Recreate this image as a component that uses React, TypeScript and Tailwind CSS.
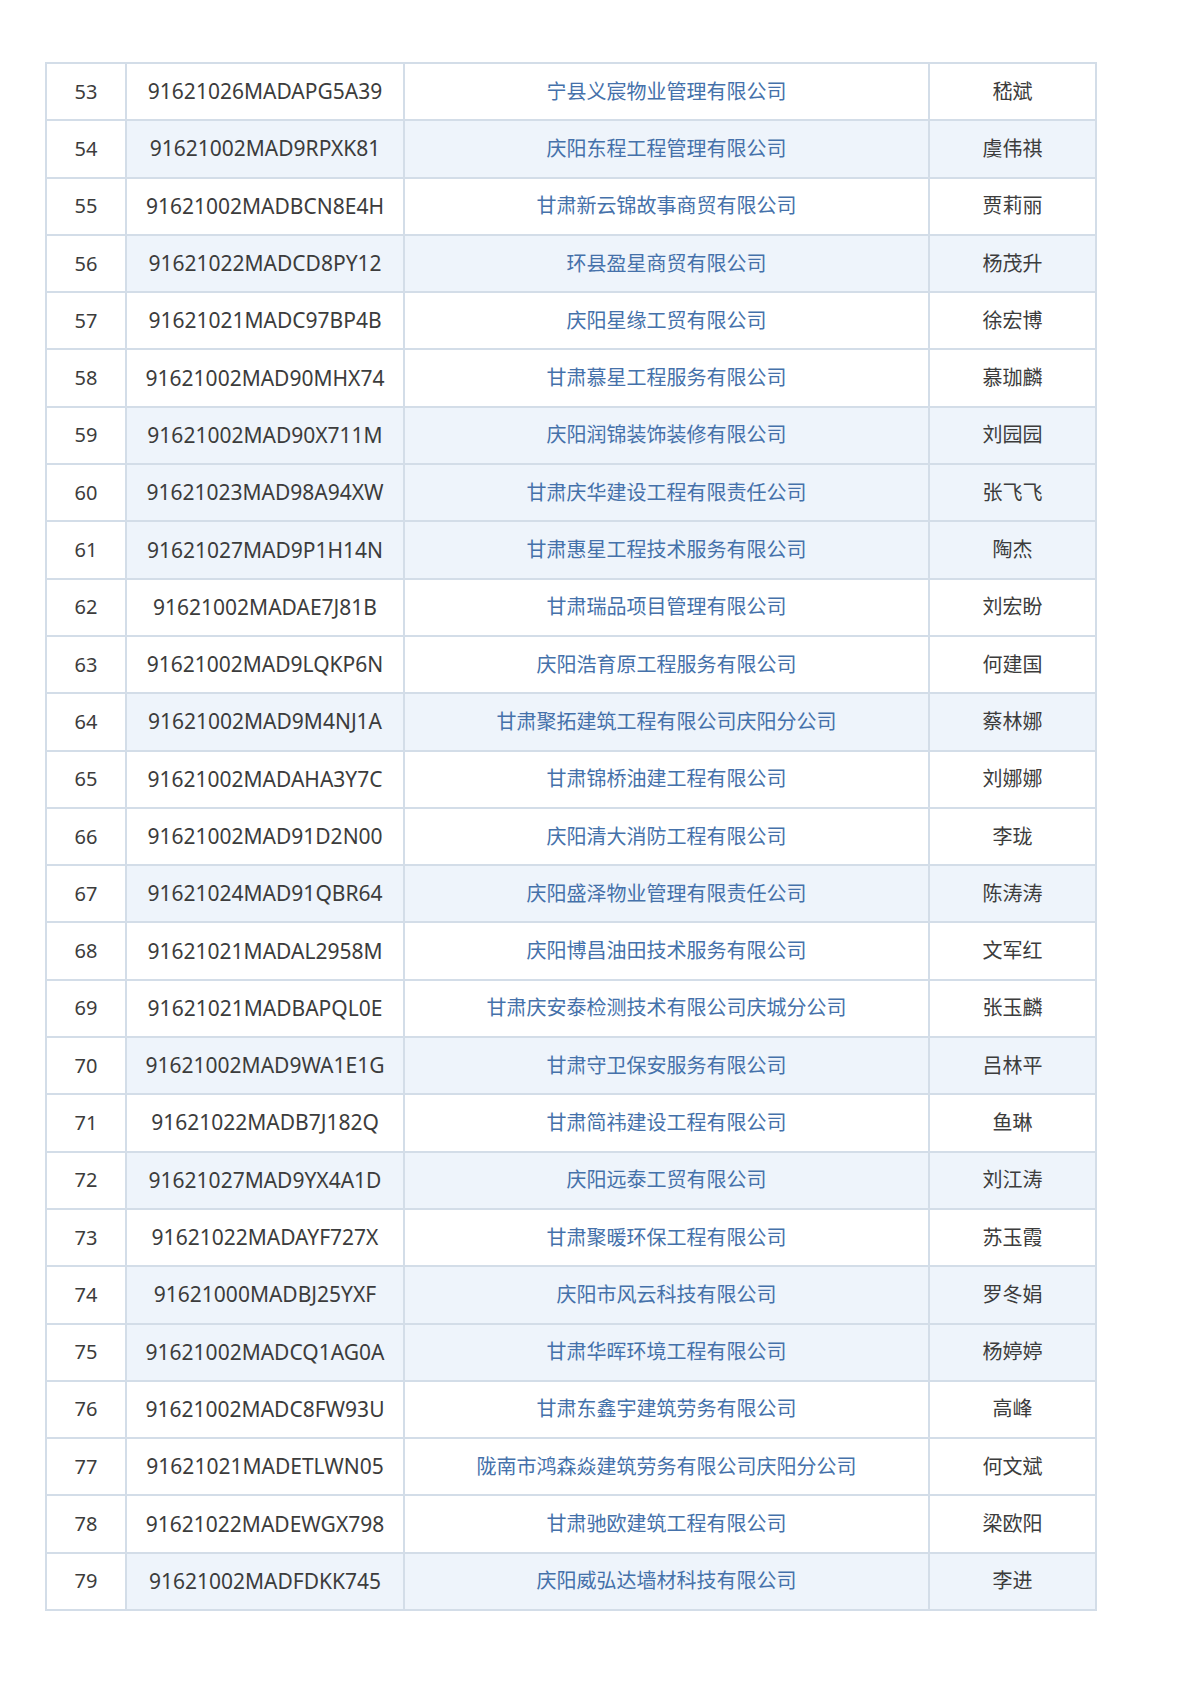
import React from 'react';

type Row = { no: number; code: string; company: string; person: string };

const rows: Row[] = [
  { no: 53, code: '91621026MADAPG5A39', company: '宁县义宸物业管理有限公司', person: '嵇斌' },
  { no: 54, code: '91621002MAD9RPXK81', company: '庆阳东程工程管理有限公司', person: '虞伟祺' },
  { no: 55, code: '91621002MADBCN8E4H', company: '甘肃新云锦故事商贸有限公司', person: '贾莉丽' },
  { no: 56, code: '91621022MADCD8PY12', company: '环县盈星商贸有限公司', person: '杨茂升' },
  { no: 57, code: '91621021MADC97BP4B', company: '庆阳星缘工贸有限公司', person: '徐宏博' },
  { no: 58, code: '91621002MAD90MHX74', company: '甘肃慕星工程服务有限公司', person: '慕珈麟' },
  { no: 59, code: '91621002MAD90X711M', company: '庆阳润锦装饰装修有限公司', person: '刘园园' },
  { no: 60, code: '91621023MAD98A94XW', company: '甘肃庆华建设工程有限责任公司', person: '张飞飞' },
  { no: 61, code: '91621027MAD9P1H14N', company: '甘肃惠星工程技术服务有限公司', person: '陶杰' },
  { no: 62, code: '91621002MADAE7J81B', company: '甘肃瑞品项目管理有限公司', person: '刘宏盼' },
  { no: 63, code: '91621002MAD9LQKP6N', company: '庆阳浩育原工程服务有限公司', person: '何建国' },
  { no: 64, code: '91621002MAD9M4NJ1A', company: '甘肃聚拓建筑工程有限公司庆阳分公司', person: '蔡林娜' },
  { no: 65, code: '91621002MADAHA3Y7C', company: '甘肃锦桥油建工程有限公司', person: '刘娜娜' },
  { no: 66, code: '91621002MAD91D2N00', company: '庆阳清大消防工程有限公司', person: '李珑' },
  { no: 67, code: '91621024MAD91QBR64', company: '庆阳盛泽物业管理有限责任公司', person: '陈涛涛' },
  { no: 68, code: '91621021MADAL2958M', company: '庆阳博昌油田技术服务有限公司', person: '文军红' },
  { no: 69, code: '91621021MADBAPQL0E', company: '甘肃庆安泰检测技术有限公司庆城分公司', person: '张玉麟' },
  { no: 70, code: '91621002MAD9WA1E1G', company: '甘肃守卫保安服务有限公司', person: '吕林平' },
  { no: 71, code: '91621022MADB7J182Q', company: '甘肃简祎建设工程有限公司', person: '鱼琳' },
  { no: 72, code: '91621027MAD9YX4A1D', company: '庆阳远泰工贸有限公司', person: '刘江涛' },
  { no: 73, code: '91621022MADAYF727X', company: '甘肃聚暖环保工程有限公司', person: '苏玉霞' },
  { no: 74, code: '91621000MADBJ25YXF', company: '庆阳市风云科技有限公司', person: '罗冬娟' },
  { no: 75, code: '91621002MADCQ1AG0A', company: '甘肃华晖环境工程有限公司', person: '杨婷婷' },
  { no: 76, code: '91621002MADC8FW93U', company: '甘肃东鑫宇建筑劳务有限公司', person: '高峰' },
  { no: 77, code: '91621021MADETLWN05', company: '陇南市鸿森焱建筑劳务有限公司庆阳分公司', person: '何文斌' },
  { no: 78, code: '91621022MADEWGX798', company: '甘肃驰欧建筑工程有限公司', person: '梁欧阳' },
  { no: 79, code: '91621002MADFDKK745', company: '庆阳威弘达墙材科技有限公司', person: '李进' },
];

// rows that carry the pale blue shading in the source
const shaded = new Set([54, 56, 59, 60, 61, 64, 67, 70, 72, 74, 75, 79]);

export default function App() {
  return (
    <div
      className="min-h-[1695px] w-full bg-white pt-[62px] pl-[45px]"
      style={{ fontFamily: '"Noto Sans", "Noto Sans CJK SC", sans-serif' }}
    >
      <table className="w-[1050px] table-fixed border-collapse border-2 border-[#d3dde8] text-[20px] leading-none">
        <colgroup>
          <col className="w-[80px]" />
          <col className="w-[278px]" />
          <col className="w-[525px]" />
          <col className="w-[167px]" />
        </colgroup>
        <tbody>
          {rows.map((r) => {
            const bg = shaded.has(r.no) ? 'bg-[#eef4fb]' : 'bg-white';
            return (
              <tr key={r.no} className="h-[57.3px]">
                <td className="border-2 border-[#d3dde8] bg-white text-center text-[#3c3c3c]">{r.no}</td>
                <td className={`border-2 border-[#d3dde8] ${bg} text-center text-[21px] text-[#3c3c3c]`}>{r.code}</td>
                <td className={`border-2 border-[#d3dde8] ${bg} text-center text-[#4571aa]`}>{r.company}</td>
                <td className={`border-2 border-[#d3dde8] ${bg} text-center text-[#3c3c3c]`}>{r.person}</td>
              </tr>
            );
          })}
        </tbody>
      </table>
    </div>
  );
}
